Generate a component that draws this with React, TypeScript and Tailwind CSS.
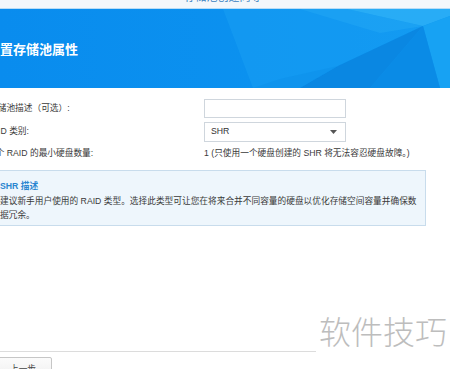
import React from "react";

const FONT = '"Liberation Sans", "Noto Sans CJK SC", sans-serif';

function HeaderArt() {
  return (
    <svg className="absolute inset-0" width="450" height="79" viewBox="0 0 450 79" preserveAspectRatio="none">
      <defs>
        <linearGradient id="base" x1="0" y1="0" x2="1" y2="0">
          <stop offset="0" stopColor="#098cee" />
          <stop offset="1" stopColor="#0d95f0" />
        </linearGradient>
      </defs>
      <rect width="450" height="79" fill="url(#base)" />
      <polygon points="223,0 347,0 423,17 338,57 300,79 253,79" fill="#1aa2f4" opacity="0.45" />
      <polygon points="300,0 347,0 423,17 380,24" fill="#2bb0f7" opacity="0.35" />
      <polygon points="347,0 450,0 450,7 423,17" fill="#35b6f8" opacity="0.7" />
      <polygon points="423,17 450,7 450,79 440,79" fill="#18a3f3" opacity="0.9" />
      <polygon points="338,57 423,17 370,79 300,79" fill="#0a83de" opacity="0.75" />
      <polygon points="423,17 370,79 440,79" fill="#0b8ae4" opacity="0.85" />
      <polygon points="253,79 300,79 338,57 280,70" fill="#0c90ea" opacity="0.5" />
    </svg>
  );
}

export default function App() {
  return (
    <div className="relative w-[450px] h-[369px] overflow-hidden bg-white" style={{ fontFamily: FONT }}>
      {/* top strip */}
      <div className="h-[9px] bg-[#f3f7fb] border-b border-[#b8dcf6] overflow-hidden flex justify-center">
        <div className="-mt-[9px] ml-[-4px] text-[11px] leading-[13px] text-[#3a7fc0] whitespace-nowrap">存储池创建向导</div>
      </div>

      {/* header */}
      <div className="relative h-[79px] overflow-hidden flex items-center">
        <HeaderArt />
        <div className="relative -ml-[13px] mt-[2px] text-[13px] font-bold text-white whitespace-nowrap">设置存储池属性</div>
      </div>

      {/* form */}
      <div className="mt-[11px] flex flex-col text-[8.7px] text-[#3a3a3a]">
        <div className="flex items-center h-[19px]">
          <div className="w-[215px] -ml-[11px] shrink-0 whitespace-nowrap">存储池描述（可选）:</div>
          <div className="w-[142px] h-[19px] border border-[#cfd6dd] bg-white" />
        </div>
        <div className="flex items-center h-[20px] mt-[4px]">
          <div className="w-[218px] -ml-[14px] shrink-0 whitespace-nowrap">RAID 类别:</div>
          <div className="w-[142px] h-[20px] border border-[#cfd6dd] bg-white flex items-center justify-between pl-[6px] pr-[8px]">
            <span className="text-[8.7px] text-[#333]">SHR</span>
            <svg width="7" height="4" viewBox="0 0 7 4">
              <polygon points="0,0 7,0 3.5,4" fill="#555" />
            </svg>
          </div>
        </div>
        <div className="flex items-center h-[18px] mt-[3px]">
          <div className="w-[215px] -ml-[13px] shrink-0 whitespace-nowrap">每个 RAID 的最小硬盘数量:</div>
          <div className="whitespace-nowrap ml-[2px]">1 (只使用一个硬盘创建的 SHR 将无法容忍硬盘故障。)</div>
        </div>
      </div>

      {/* info box */}
      <div className="mt-[7px] -ml-[10px] w-[436px] h-[56px] border border-[#c8dcec] bg-[#eef6fc] pl-[9px] pt-[9px]">
        <div className="text-[8.7px] font-bold text-[#2a86d0] leading-[13px] whitespace-nowrap">SHR 描述</div>
        <div className="text-[8.7px] text-[#3a3a3a] leading-[14px] whitespace-nowrap mt-[1px]">
          建议新手用户使用的 RAID 类型。选择此类型可让您在将来合并不同容量的硬盘以优化存储空间容量并确保数
          <br />
          据冗余。
        </div>
      </div>

      {/* footer line */}
      <div className="mt-[125px] border-t border-[#dcdcdc]" />
      <div className="mt-[5px] -ml-[6px] w-[58px] h-[24px] border border-[#c6c6c6] rounded-[2px] bg-gradient-to-b from-[#fbfbfb] to-[#eeeeee] flex items-start justify-center pt-[5px]">
        <span className="text-[8.7px] text-[#444] leading-[12px]">上一步</span>
      </div>

      {/* watermark */}
      <div
        className="absolute left-[316px] top-[306px] w-[134px] h-[48px] bg-white flex items-center pl-[3px] text-[32px] font-light text-[#bdbdbd] whitespace-nowrap leading-none"
        style={{ fontFamily: '"Noto Sans CJK SC", sans-serif' }}
      >
        软件技巧
      </div>
    </div>
  );
}
